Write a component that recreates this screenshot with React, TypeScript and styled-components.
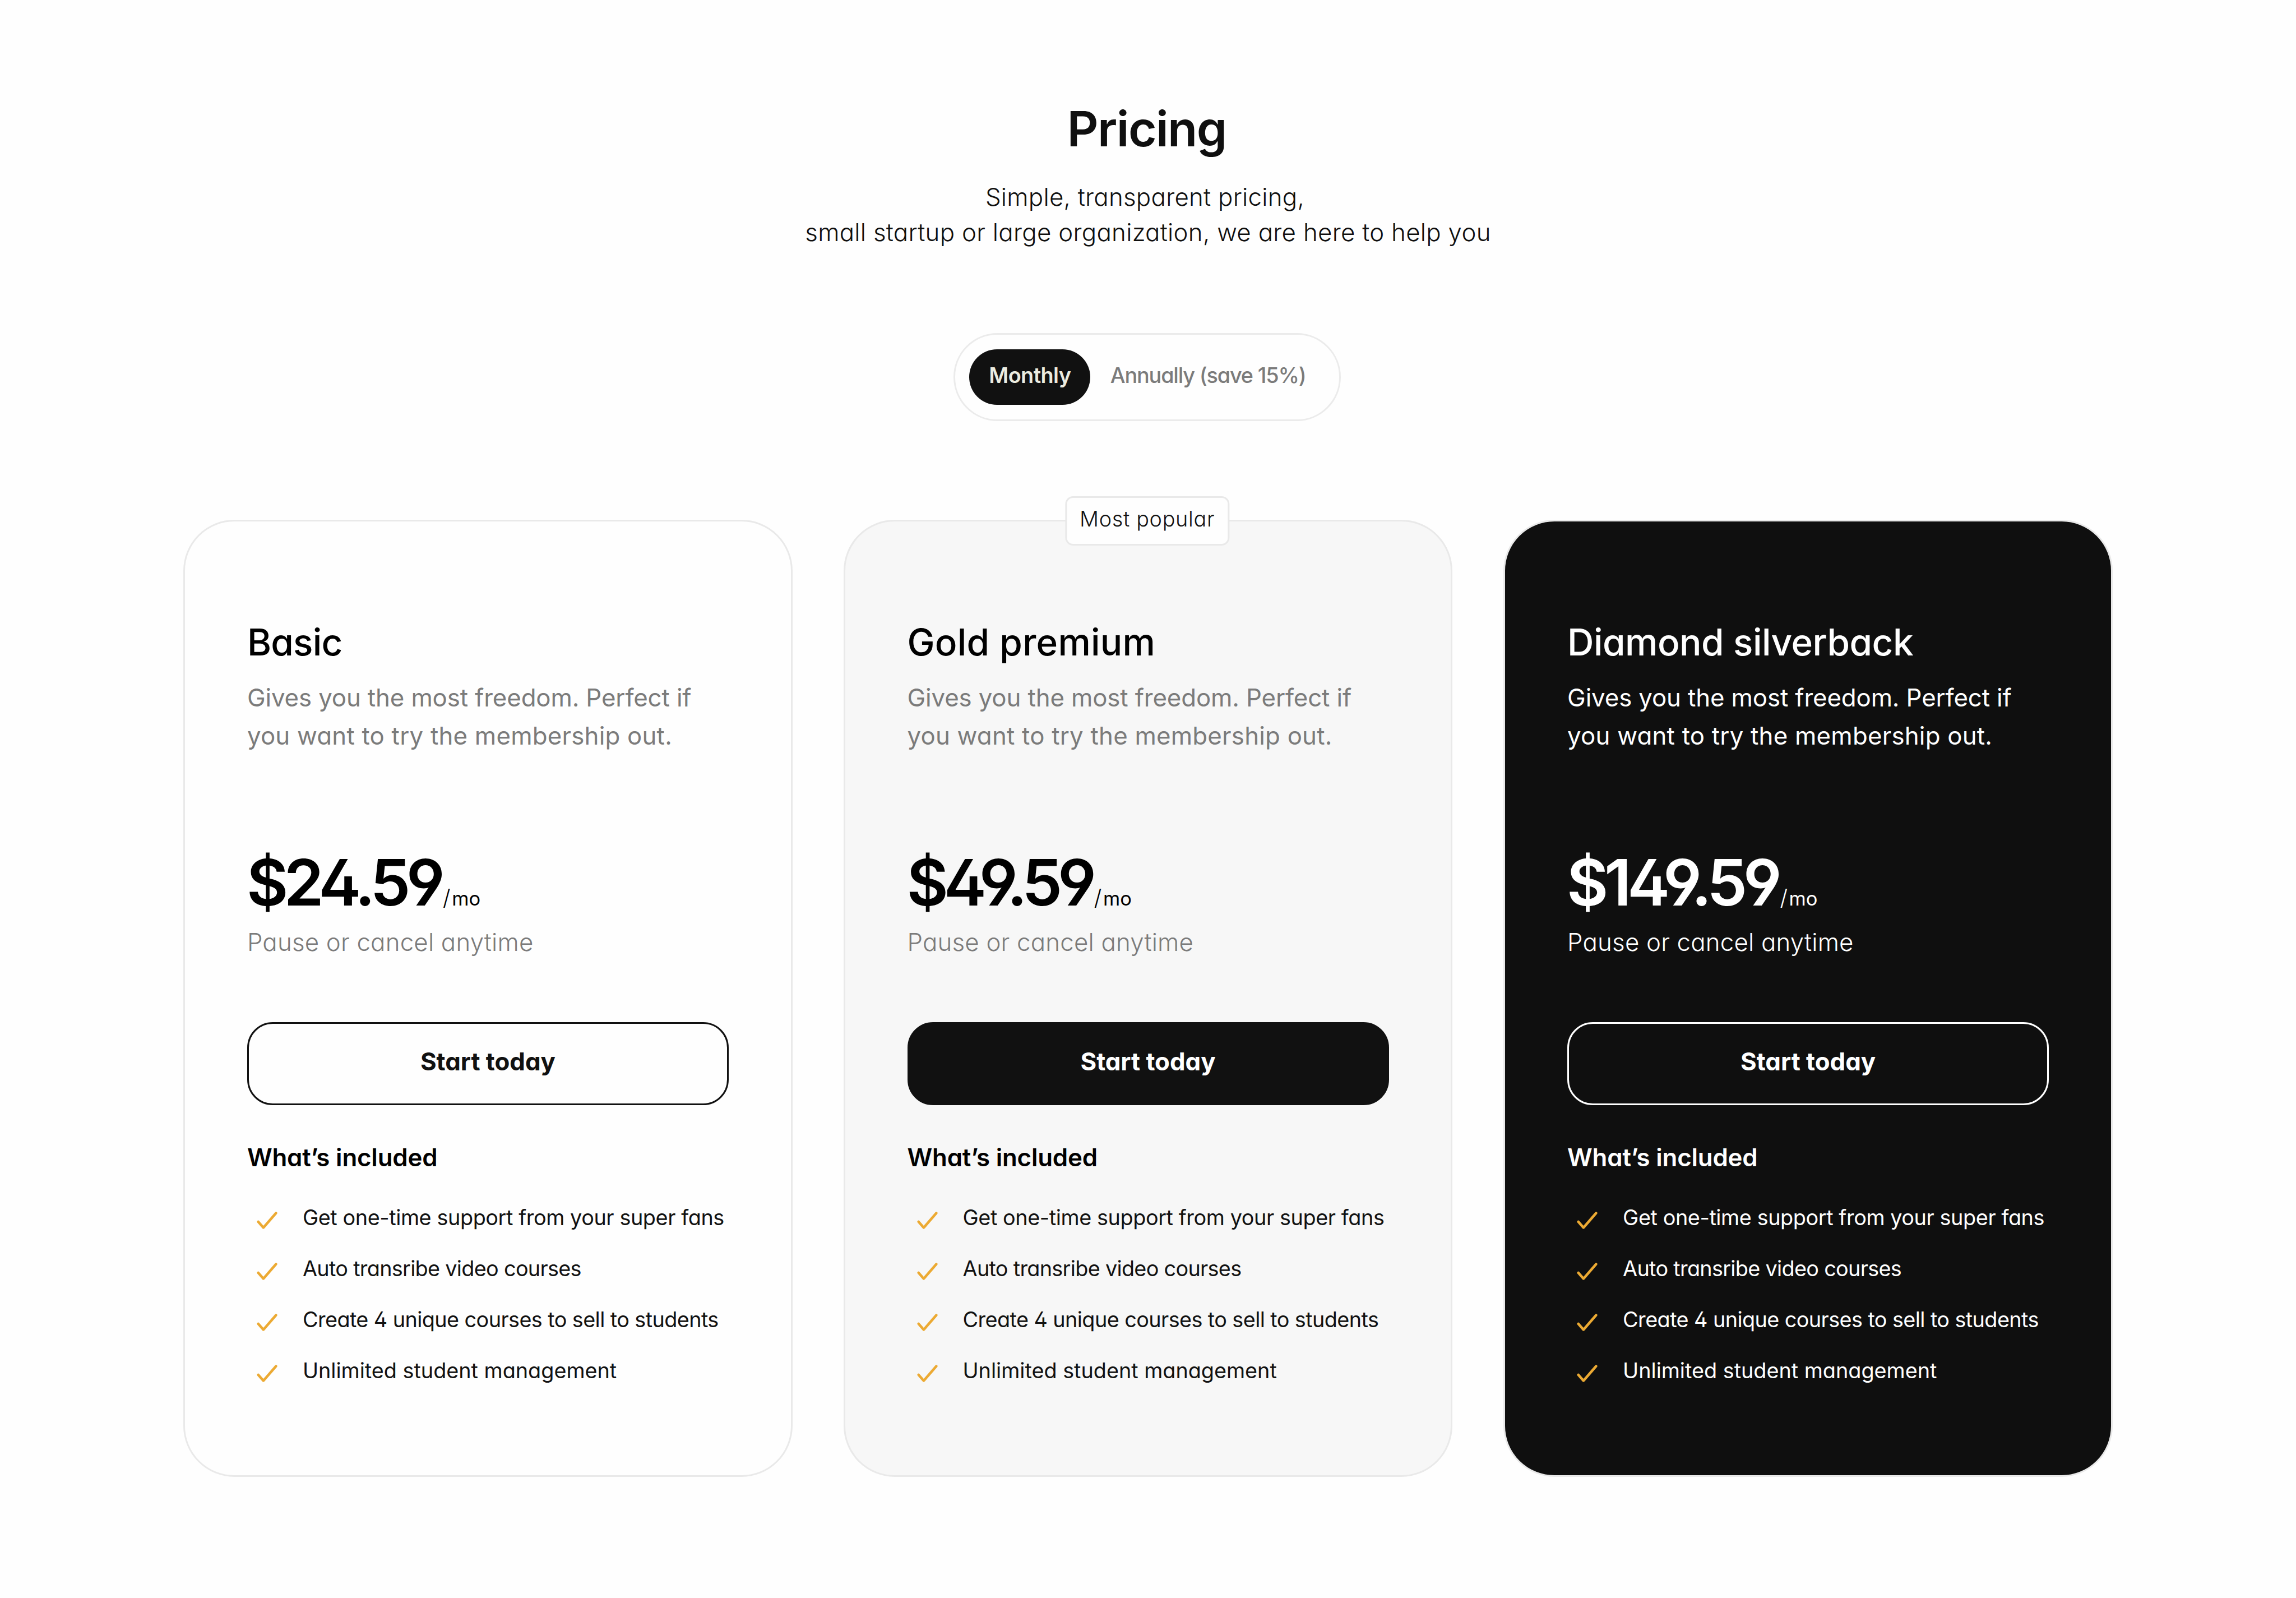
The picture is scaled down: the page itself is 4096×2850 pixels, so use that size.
import React, { useState } from 'react';
import styled, { createGlobalStyle, css } from 'styled-components';

const GlobalStyle = createGlobalStyle`
  *, *::before, *::after {
    box-sizing: border-box;
  }
  body {
    margin: 0;
    background: #fefefe;
    color: #111111;
    font-family: Inter, 'Open Sans', sans-serif;
    /* single-storey a, open 4, straight-tailed 9 */
    font-feature-settings: 'cv11', 'cv02', 'cv04';
  }
  h1, h2, h3, p, ul {
    margin: 0;
    padding: 0;
    font-weight: inherit;
  }
`;

type Tone = 'plain' | 'soft' | 'dark';

interface TextLine {
  text: string;
  tracking: number;
}

interface Plan {
  name: TextLine;
  price: TextLine;
  tone: Tone;
  badge?: string;
}

const Page = styled.main`
  width: 4096px;
  height: 2850px;
  padding-top: 175px;
  display: flex;
  flex-direction: column;
  align-items: center;
  overflow: hidden;
`;

const Title = styled.h1`
  margin-right: 5px;
  font-size: 87px;
  line-height: 110px;
  font-weight: 570;
  letter-spacing: -0.0185em;
  color: #0f0f0f;
`;

const Subtitle = styled.p`
  margin-top: 36px;
  font-size: 43.8px;
  line-height: 62.8px;
  font-weight: 360;
  text-align: center;
  color: #0f0f0f;
`;

const Line = styled.span<{ $tracking: number }>`
  display: block;
  white-space: nowrap;
  letter-spacing: ${({ $tracking }) => $tracking}em;
`;

const SubtitleLine = styled(Line)<{ $inset?: number }>`
  padding-right: ${({ $inset = 0 }) => $inset}px;
`;

const Toggle = styled.div`
  width: 691.7px;
  height: 156.4px;
  margin: 147.9px 3px 0 0;
  padding-left: 25.6px;
  display: flex;
  align-items: center;
  border: 3px solid #ebebeb;
  border-radius: 80px;
`;

const ToggleOption = styled.button<{ $active: boolean }>`
  height: 99.6px;
  padding: 0 0 8px;
  border: none;
  border-radius: 50px;
  font-family: inherit;
  font-feature-settings: inherit;
  font-size: 37.8px;
  white-space: nowrap;
  cursor: pointer;
  ${({ $active }) =>
    $active
      ? css`
          width: 216.2px;
          background: #111111;
          color: #ecece0;
          font-weight: 600;
          letter-spacing: -0.0153em;
        `
      : css`
          margin-left: 35.4px;
          background: none;
          color: #7b7b7b;
          font-weight: 500;
          letter-spacing: -0.031em;
        `}
`;

const Plans = styled.section`
  margin-top: 176.4px;
  display: grid;
  grid-template-columns: repeat(3, 1086.6px);
  column-gap: 91px;
`;

const tones = {
  plain: css`
    background: #fefefe;
    color: #000000;
    --muted: #7b7b7b;
    --item: #111111;
  `,
  soft: css`
    background: #f7f7f7;
    color: #000000;
    --muted: #7b7b7b;
    --item: #111111;
  `,
  dark: css`
    background: #0f0f0f;
    color: #ffffff;
    --muted: #ffffff;
    --item: #ffffff;
  `,
};

const Card = styled.article<{ $tone: Tone }>`
  position: relative;
  height: 1706.7px;
  padding: 174.3px 110.8px 0;
  border: 3px solid #e9e9e9;
  border-radius: 91px;
  ${({ $tone }) => tones[$tone]}
`;

const Badge = styled.span`
  position: absolute;
  top: -45.7px;
  left: calc(50% - 1.4px);
  transform: translateX(-50%);
  width: 293.3px;
  height: 88.1px;
  padding-bottom: 8px;
  display: flex;
  align-items: center;
  justify-content: center;
  border: 3px solid #e9e9e9;
  border-radius: 14px;
  background: #fefefe;
  color: #111111;
  font-size: 37.8px;
  font-weight: 360;
  letter-spacing: 0.018em;
  white-space: nowrap;
`;

const PlanName = styled.h2<{ $tracking: number }>`
  font-size: 65.7px;
  line-height: 80px;
  font-weight: 500;
  letter-spacing: ${({ $tracking }) => $tracking}em;
`;

const Description = styled.p`
  margin-top: 26.4px;
  font-size: 43.8px;
  line-height: 68.4px;
  color: var(--muted);
`;

const PriceRow = styled.div`
  height: 138px;
  margin: 157px 0 0 -1px;
  display: flex;
  align-items: baseline;
`;

const Price = styled.span<{ $tracking: number }>`
  font-size: 114.4px;
  line-height: 138px;
  font-weight: 600;
  letter-spacing: ${({ $tracking }) => $tracking}em;
`;

const Period = styled.span`
  margin-left: 4px;
  font-size: 34.5px;
  font-weight: 440;
`;

const Slash = styled.span`
  margin-right: 2.5px;
  font-size: 39px;
  line-height: 1;
  font-weight: 300;
`;

const Note = styled.p`
  margin-top: 8px;
  font-size: 43.8px;
  line-height: 60px;
  font-weight: 320;
  letter-spacing: 0.0045em;
  color: var(--muted);
`;

const StartButton = styled.button<{ $tone: Tone }>`
  width: 100%;
  height: 148px;
  margin-top: 112.5px;
  padding: 0 0 7px;
  border: 3px solid ${({ $tone }) => ($tone === 'dark' ? '#ffffff' : '#111111')};
  border-radius: 45.5px;
  background: ${({ $tone }) => ($tone === 'soft' ? '#111111' : 'transparent')};
  color: ${({ $tone }) => ($tone === 'plain' ? '#111111' : '#ffffff')};
  font-family: inherit;
  font-feature-settings: inherit;
  font-size: 43.8px;
  font-weight: 700;
  cursor: pointer;
`;

const Included = styled.h3`
  margin-top: 63.5px;
  font-size: 43.8px;
  line-height: 60px;
  font-weight: 600;
  letter-spacing: -0.004em;
`;

const FeatureList = styled.ul`
  margin-top: 31.2px;
  list-style: none;
`;

const Feature = styled.li<{ $tracking: number }>`
  height: 91.02px;
  display: flex;
  font-size: 37.8px;
  line-height: 91px;
  letter-spacing: ${({ $tracking }) => $tracking}em;
  white-space: nowrap;
  color: var(--item);
`;

const CheckSvg = styled.svg`
  flex: none;
  width: 99px;
  height: 91px;
`;

const CheckIcon = () => (
  <CheckSvg viewBox="0 0 99 91" fill="none">
    <path
      d="M19.7 53L28.9 63.4L51.4 37.6"
      stroke="#ecaa33"
      strokeWidth="4.6"
      strokeLinecap="round"
      strokeLinejoin="round"
    />
  </CheckSvg>
);

const description: TextLine[] = [
  { text: 'Gives you the most freedom. Perfect if', tracking: -0.003 },
  { text: 'you want to try the membership out.', tracking: 0.0049 },
];

const features: TextLine[] = [
  { text: 'Get one-time support from your super fans', tracking: -0.011 },
  { text: 'Auto transribe video courses', tracking: -0.0185 },
  { text: 'Create 4 unique courses to sell to students', tracking: -0.0156 },
  { text: 'Unlimited student management', tracking: -0.0005 },
];

const plans: Plan[] = [
  {
    name: { text: 'Basic', tracking: -0.012 },
    price: { text: '$24.59', tracking: -0.0676 },
    tone: 'plain',
  },
  {
    name: { text: 'Gold premium', tracking: 0.004 },
    price: { text: '$49.59', tracking: -0.0721 },
    tone: 'soft',
    badge: 'Most popular',
  },
  {
    name: { text: 'Diamond silverback', tracking: -0.008 },
    price: { text: '$149.59', tracking: -0.0647 },
    tone: 'dark',
  },
];

const periods = ['Monthly', 'Annually (save 15%)'];

const PlanCard: React.FC<{ plan: Plan }> = ({ plan }) => (
  <Card $tone={plan.tone}>
    {plan.badge && <Badge>{plan.badge}</Badge>}
    <PlanName $tracking={plan.name.tracking}>{plan.name.text}</PlanName>
    <Description>
      {description.map((line) => (
        <Line key={line.text} $tracking={line.tracking}>{line.text}</Line>
      ))}
    </Description>
    <PriceRow>
      <Price $tracking={plan.price.tracking}>{plan.price.text}</Price>
      <Period>
        <Slash>/</Slash>mo
      </Period>
    </PriceRow>
    <Note>Pause or cancel anytime</Note>
    <StartButton $tone={plan.tone}>Start today</StartButton>
    <Included>What’s included</Included>
    <FeatureList>
      {features.map((feature) => (
        <Feature key={feature.text} $tracking={feature.tracking}>
          <CheckIcon />
          {feature.text}
        </Feature>
      ))}
    </FeatureList>
  </Card>
);

const App: React.FC = () => {
  const [period, setPeriod] = useState(periods[0]);
  return (
    <>
      <GlobalStyle />
      <Page>
        <Title>Pricing</Title>
        <Subtitle>
          <SubtitleLine $tracking={0.006} $inset={11}>Simple, transparent pricing,</SubtitleLine>
          <SubtitleLine $tracking={0.0066}>
            small startup or large organization, we are here to help you
          </SubtitleLine>
        </Subtitle>
        <Toggle>
          {periods.map((item) => (
            <ToggleOption key={item} $active={item === period} onClick={() => setPeriod(item)}>
              {item}
            </ToggleOption>
          ))}
        </Toggle>
        <Plans>
          {plans.map((plan) => (
            <PlanCard key={plan.name.text} plan={plan} />
          ))}
        </Plans>
      </Page>
    </>
  );
};

export default App;
